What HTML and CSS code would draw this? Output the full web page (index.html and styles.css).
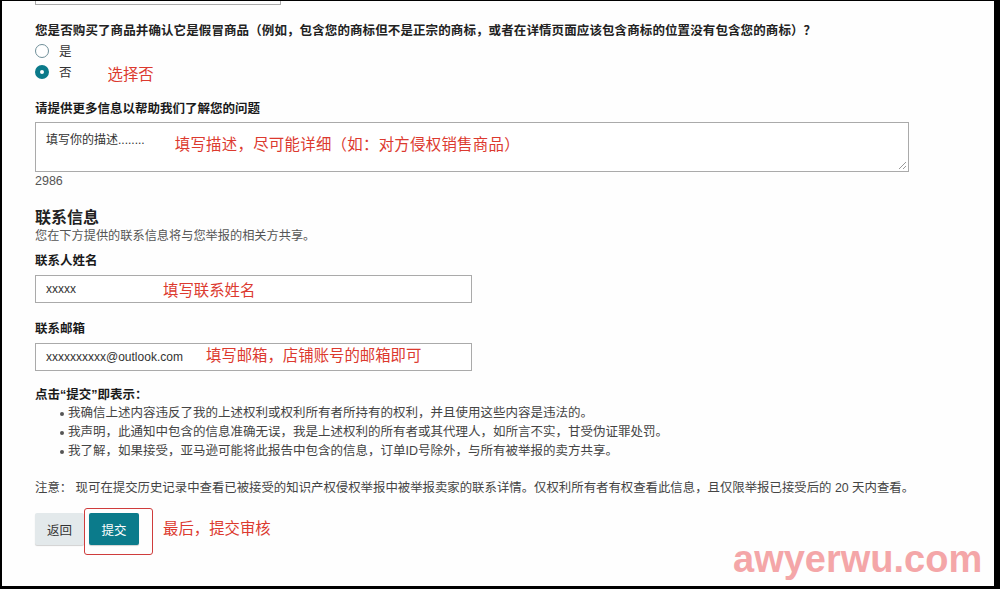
FILE: index.html
```html
<!DOCTYPE html>
<html lang="zh-CN">
<head>
	<meta charset="utf-8">
	<title>举报表单</title>
	<link rel="stylesheet" href="styles.css">
</head>
<body>
	<div class="frame">
		<div class="prevField"></div>

		<p class="question">您是否购买了商品并确认它是假冒商品（例如，包含您的商标但不是正宗的商标，或者在详情页面应该包含商标的位置没有包含您的商标）？</p>
		<div class="radioRow">
			<span class="radio"></span>
			<span class="radioText">是</span>
		</div>
		<div class="radioRow">
			<span class="radio on"></span>
			<span class="radioText">否</span>
			<span class="mark markRadio">选择否</span>
		</div>

		<p class="label labelDesc">请提供更多信息以帮助我们了解您的问题</p>
		<div class="field area">
			<span class="value">填写你的描述........</span>
			<span class="mark markArea">填写描述，尽可能详细（如：对方侵权销售商品）</span>
			<svg class="grip" width="9" height="9" viewBox="0 0 9 9"><path d="M8 1 L1 8 M8 5 L5 8" stroke="#999" stroke-width="1"/></svg>
		</div>
		<p class="count">2986</p>

		<h2 class="sectionTitle">联系信息</h2>
		<p class="sectionSub">您在下方提供的联系信息将与您举报的相关方共享。</p>

		<p class="label labelName">联系人姓名</p>
		<div class="field input">
			<span class="value">xxxxx</span>
			<span class="mark markName">填写联系姓名</span>
		</div>

		<p class="label labelMail">联系邮箱</p>
		<div class="field input">
			<span class="value">xxxxxxxxxx@outlook.com</span>
			<span class="mark markMail">填写邮箱，店铺账号的邮箱即可</span>
		</div>

		<p class="label labelAgree">点击“提交”即表示：</p>
		<ul class="agreeList">
			<li>我确信上述内容违反了我的上述权利或权利所有者所持有的权利，并且使用这些内容是违法的。</li>
			<li>我声明，此通知中包含的信息准确无误，我是上述权利的所有者或其代理人，如所言不实，甘受伪证罪处罚。</li>
			<li>我了解，如果接受，亚马逊可能将此报告中包含的信息，订单ID号除外，与所有被举报的卖方共享。</li>
		</ul>

		<p class="note">注意： 现可在提交历史记录中查看已被接受的知识产权侵权举报中被举报卖家的联系详情。仅权利所有者有权查看此信息，且仅限举报已接受后的 20 天内查看。</p>

		<div class="btnRow">
			<button type="button" class="btn btnBack">返回</button>
			<span class="submitBox"><button type="button" class="btn btnSubmit">提交</button></span>
			<span class="mark markSubmit">最后，提交审核</span>
		</div>

		<span class="watermark">awyerwu.com</span>
	</div>
</body>
</html>
```

FILE: styles.css
```css
* {margin:0; padding:0; box-sizing:border-box;}
html, body {background:#000;}
body {font-family:"Liberation Sans", "Noto Sans CJK SC", sans-serif; font-size:12.5px; color:#333;}

.frame {position:relative; width:1000px; height:589px; padding-left:33px; border-style:solid; border-color:#000; border-width:1px 6px 3px 2px; background:#fefefe; overflow:hidden;}

.prevField {width:246px; height:4px; border:1px solid #aaa; border-top:0;}

.question {margin-top:17px; line-height:18px; font-weight:bold; color:#222; letter-spacing:0.1px;}

.radioRow {display:flex; align-items:center; height:21px;}
.radio {width:14px; height:14px; border:1px solid #6f8f99; border-radius:50%; background:#fff;}
.radio.on {border:5px solid #0b7a8a;}
.radioText {margin-left:10px; color:#333;}

.mark {color:#dc3a2f; font-size:15.4px; line-height:18px;}
.markRadio {margin-left:36px; margin-top:6px;}

.label {line-height:18px; font-weight:bold; color:#1a1a1a;}
.labelDesc {margin-top:18px;}
.labelName {margin-top:8px;}
.labelMail {margin-top:17px;}
.labelAgree {margin-top:15px;}

.field {display:flex; align-items:flex-start; border:1px solid #aaa; background:#fff; padding-left:10px; color:#333;}
.field .value {font-size:12px; line-height:18px;}
.area {position:relative; width:874px; height:50px; margin-top:4px; padding-top:8px;}
.area .markArea {margin-left:30px; margin-top:5px; letter-spacing:0.3px;}
.area .grip {position:absolute; right:1px; bottom:1px;}
.input {width:437px; height:28px; margin-top:5px; align-items:center;}
.markName {margin-left:87px; margin-top:4px;}
.markMail {margin-left:23px; margin-top:-2px;}

.count {line-height:18px; color:#555;}

.sectionTitle {margin-top:18px; font-size:16px; line-height:20px; font-weight:bold; color:#222;}
.sectionSub {line-height:16px; color:#555; font-size:12.2px;}

.agreeList {list-style:none; padding-left:25px;}
.agreeList li {display:flex; align-items:center; line-height:19px; color:#444;}
.agreeList li::before {content:""; width:4px; height:4px; margin-right:4px; border-radius:50%; background:#555; flex:none;}

.note {margin-top:18px; line-height:18px; color:#444; font-size:12.4px;}

.btnRow {display:flex; align-items:flex-start; margin-top:11px;}
.btn {height:32px; font-family:inherit; font-size:12.5px; border:0; border-radius:2px; box-shadow:0 1px 1px rgba(0,0,0,.18);}
.btnBack {width:49px; margin-top:5px; color:#333; background:#e3e9eb;}
.submitBox {display:block; padding:4px 13px 9px 4px; border:1.5px solid #cf3c3c; border-radius:3px;}
.btnSubmit {display:block; width:50px; color:#fff; background:#0b7b8b;}
.markSubmit {margin-left:10px; margin-top:12px;}

.watermark {position:absolute; left:731px; top:539px; font-size:38px; line-height:1; font-weight:bold; color:#f4a6a8;}
```
